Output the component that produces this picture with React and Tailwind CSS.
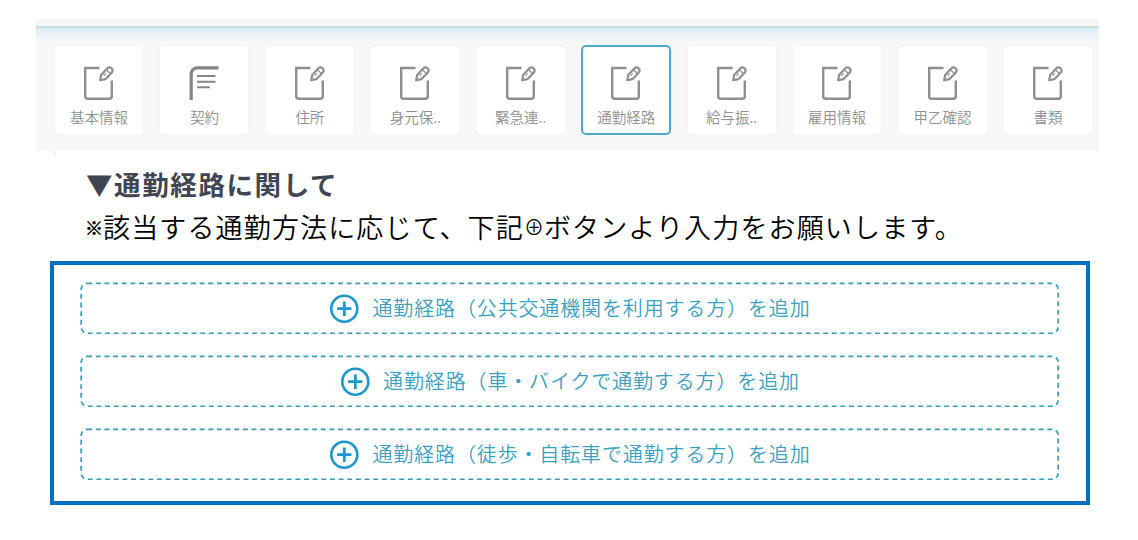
import React from 'react';

const tabs = [
    { label: '基本情報', icon: 'edit' },
    { label: '契約', icon: 'contract' },
    { label: '住所', icon: 'edit' },
    { label: '身元保..', icon: 'edit' },
    { label: '緊急連..', icon: 'edit' },
    { label: '通勤経路', icon: 'edit', active: true },
    { label: '給与振..', icon: 'edit' },
    { label: '雇用情報', icon: 'edit' },
    { label: '甲乙確認', icon: 'edit' },
    { label: '書類', icon: 'edit' },
];

const routes = [
    '通勤経路（公共交通機関を利用する方）を追加',
    '通勤経路（車・バイクで通勤する方）を追加',
    '通勤経路（徒歩・自転車で通勤する方）を追加',
];

function EditIcon() {
    return (
        <svg width="32" height="36" viewBox="0 0 32 36" fill="none" stroke="#8f8f8f">
            <path d="M16.5 4H2.2V32.2a2.6 2.6 0 0 0 2.6 2.6h21.4a2.6 2.6 0 0 0 2.6-2.6V16.5" strokeWidth="2.4" />
            <path d="M17.2 16.3l1-5.4 6.2-6.7a3.1 3.1 0 0 1 4.5 4.2l-6.3 6.7z" strokeWidth="2.2" strokeLinejoin="round" />
            <path d="M23.4 5.8l4 3.7" strokeWidth="1.3" />
            <path d="M20.6 11.8l2.2-2.4" strokeWidth="1.1" />
        </svg>
    );
}

function ContractIcon() {
    return (
        <svg width="32" height="36" viewBox="0 0 32 36" fill="none" stroke="#858585">
            <path d="M3.2 36V9.9a6 6 0 0 1 6-6H30.5" strokeWidth="3.2" />
            <path d="M9 12h18.5M9 17.8h18.5M9 23.2h12.8" strokeWidth="2" />
        </svg>
    );
}

function Tab({ label, icon, active }) {
    return (
        <button
            className={`flex h-[90px] w-[90px] shrink-0 flex-col items-center rounded-[5px] bg-white bg-clip-padding ${active ? 'border-2 border-[#4ba9cb] pt-[17px]' : 'border border-[#f4f4f4] pt-[18px]'}`}
        >
            {icon === 'contract' ? <ContractIcon /> : <EditIcon />}
            <span className="mt-[7px] text-[14.5px] leading-[20px] font-[350] whitespace-nowrap text-[#909090]">{label}</span>
        </button>
    );
}

function AddButton({ label }) {
    return (
        <button className="relative flex h-[52px] w-full items-center justify-center gap-[13px] text-[#3b9fc2]">
            {/* Dashed outline */}
            <svg className="absolute inset-0 h-full w-full" viewBox="0 0 979 52" fill="none">
                <rect x="0.7" y="1.3" width="977" height="50" rx="6" stroke="#399bb8" strokeWidth="1.7" strokeDasharray="4.9 3.75" />
            </svg>
            <svg width="30" height="30" viewBox="0 0 30 30" fill="none" stroke="#1e97cc">
                <circle cx="15.3" cy="15.7" r="13" strokeWidth="2.6" />
                <path d="M15.3 8.5v14.4M8.1 15.7h14.4" strokeWidth="2.8" />
            </svg>
            <span className="text-[20px] leading-[28px] font-[350] tracking-[0.86px]">{label}</span>
        </button>
    );
}

export default function App() {
    return (
        <div className="h-[540px] w-[1138px] overflow-hidden bg-white pt-[19px] font-['Noto_Sans_CJK_JP',sans-serif]">
            {/* Tab bar */}
            <div className="ml-[36px] h-[132px] w-[1063px] bg-[#f7f7f7]">
                <div className="h-[7px]" />
                <div className="h-[19px] border-t-2 border-[#cbdce2] bg-linear-to-b from-[#daecf4] to-[#f7f7f7] to-80%" />
                <div className="flex justify-between pr-[6px] pl-[18px]">
                    {tabs.map((tab) => (
                        <Tab key={tab.label} {...tab} />
                    ))}
                </div>
            </div>
            <div className="ml-[55px] h-[4px] w-px bg-[#eeeeee]" />

            <div className="pt-[9px] pl-[86px] whitespace-nowrap">
                <h1 className="text-[26.5px] leading-[40px] font-bold tracking-[1.6px] text-[#3f4652]">▼通勤経路に関して</h1>
                <p className="mt-[3px] flex items-center text-[27px] leading-[40px] font-[350] tracking-[1.15px] text-black">
                    <span className="w-[17px] -translate-x-px text-[18px] tracking-normal [-webkit-text-stroke:0.6px_black]">※</span>
                    <span>該当する通勤方法に応じて、下記</span>
                    <span className="w-[20px] text-[20px] tracking-normal">⊕</span>
                    <span>ボタンより入力をお願いします。</span>
                </p>
            </div>

            {/* Commute routes */}
            <div className="mt-[14px] ml-[50px] flex h-[244px] w-[1040px] flex-col gap-[21px] border-4 border-[#0070c3] px-[26px] pt-[17px]">
                {routes.map((route) => (
                    <AddButton key={route} label={route} />
                ))}
            </div>
        </div>
    );
}
